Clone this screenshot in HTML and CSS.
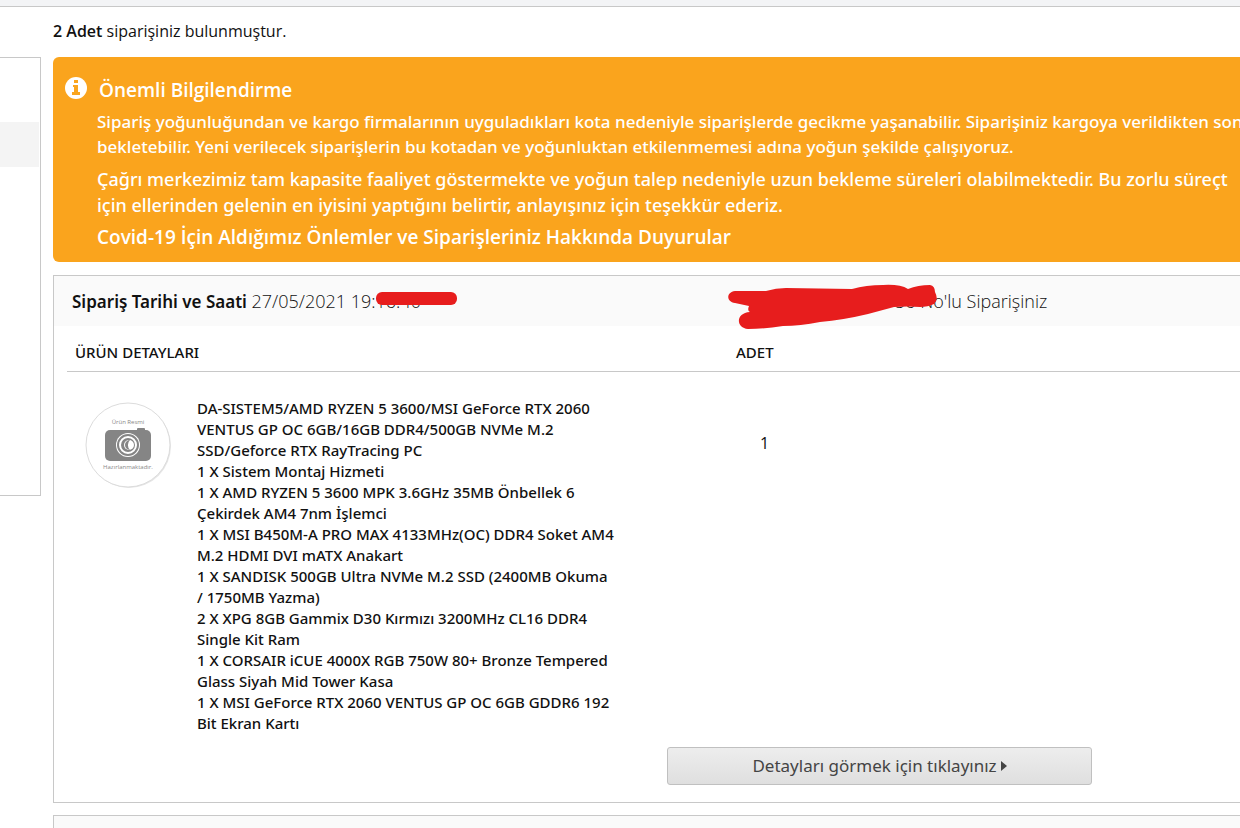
FILE: index.html
```html
<!DOCTYPE html>
<html lang="tr">
<head>
  <meta charset="UTF-8" />
  <meta name="viewport" content="width=device-width,initial-scale=1.0"/>
  <title>Siparişlerim</title>
  <link rel="stylesheet" href="styles.css">
</head>
<body>
  <div class="topbar"></div>
  <div class="page">
    <aside class="sidebar">
      <div class="sidebar-active"></div>
    </aside>
    <main class="content">
      <p class="result-count"><strong>2 Adet</strong> siparişiniz bulunmuştur.</p>

      <section class="notice">
        <h2 class="notice-title">
          <svg class="notice-icon" viewBox="0 0 22 22" aria-hidden="true">
            <circle cx="11" cy="11" r="11" fill="#fff"/>
            <path fill="#faa51e" d="M9 3h4v3H9zM8 8h5v7h2v3H7v-3h2v-5H8z"/>
          </svg>
          Önemli Bilgilendirme
        </h2>
        <p class="notice-text">Sipariş yoğunluğundan ve kargo firmalarının uyguladıkları kota nedeniyle siparişlerde gecikme yaşanabilir. Siparişiniz kargoya verildikten son<br>bekletebilir. Yeni verilecek siparişlerin bu kotadan ve yoğunluktan etkilenmemesi adına yoğun şekilde çalışıyoruz.</p>
        <p class="notice-text notice-large">Çağrı merkezimiz tam kapasite faaliyet göstermekte ve yoğun talep nedeniyle uzun bekleme süreleri olabilmektedir. Bu zorlu süreçt<br>için ellerinden gelenin en iyisini yaptığını belirtir, anlayışınız için teşekkür ederiz.</p>
        <a class="notice-link" href="#">Covid-19 İçin Aldığımız Önlemler ve Siparişleriniz Hakkında Duyurular</a>
      </section>

      <section class="order">
        <div class="order-head">
          <div class="order-date">
            <strong>Sipariş Tarihi ve Saati</strong> 27/05/2021 19:<span class="masked">16:40<svg class="time-mask" viewBox="0 0 82 14" aria-hidden="true"><rect width="81" height="13" rx="6" fill="#e71d1d"/></svg></span>
          </div>
          <div class="order-no">
            56 No'lu Siparişiniz
            <svg class="no-mask" viewBox="0 0 210 46" aria-hidden="true">
              <path fill="#e71d1d" d="M7 7H38Q48 4 58 4L124 5Q138 1 155 1Q172 0 180 5Q190 1 202 1Q207 2 207 8Q211 16 206 20Q200 23 192 23Q180 22 166 23L140 30Q115 36 92 38Q72 42 55 42Q36 45 20 45C8 44 7 29 22 28Q19 27 21 22L7 19C-2 18-2 8 7 7Z"/>
            </svg>
          </div>
        </div>
        <table class="order-table">
          <colgroup>
            <col class="col-image">
            <col class="col-detail">
            <col class="col-qty">
            <col>
          </colgroup>
          <thead>
            <tr>
              <th colspan="2">ÜRÜN DETAYLARI</th>
              <th>ADET</th>
              <th></th>
            </tr>
          </thead>
          <tbody>
            <tr>
              <td class="cell-image">
                <svg class="no-image" viewBox="0 0 92 92" role="img" aria-label="Ürün Resmi Hazırlanmaktadır">
                  <circle cx="47" cy="47" r="42" fill="#e6e6e6"/>
                  <circle cx="46" cy="46" r="42" fill="#fff" stroke="#dcdcdc"/>
                  <text x="46" y="25" text-anchor="middle" class="no-image-text">Ürün Resmi</text>
                  <rect x="23" y="31" width="46" height="31" rx="5" fill="#858585"/>
                  <rect x="55" y="29" width="8" height="5" rx="1" fill="#858585"/>
                  <circle cx="46" cy="46" r="12" fill="#fff"/>
                  <circle cx="46" cy="46" r="10" fill="none" stroke="#858585" stroke-width="2"/>
                  <circle cx="46" cy="46" r="7" fill="#858585"/>
                  <circle cx="47" cy="46" r="5" fill="#fff"/>
                  <path d="M48 41a5 5 0 0 0 0 10 7 7 0 0 1 0-10Z" fill="#858585"/>
                  <text x="46" y="70" text-anchor="middle" class="no-image-text">Hazırlanmaktadır.</text>
                </svg>
              </td>
              <td class="cell-detail">
                DA-SISTEM5/AMD RYZEN 5 3600/MSI GeForce RTX 2060<br>VENTUS GP OC 6GB/16GB DDR4/500GB NVMe M.2<br>SSD/Geforce RTX RayTracing PC<br>
                1 X Sistem Montaj Hizmeti<br>
                1 X AMD RYZEN 5 3600 MPK 3.6GHz 35MB Önbellek 6<br>Çekirdek AM4 7nm İşlemci<br>
                1 X MSI B450M-A PRO MAX 4133MHz(OC) DDR4 Soket AM4<br>M.2 HDMI DVI mATX Anakart<br>
                1 X SANDISK 500GB Ultra NVMe M.2 SSD (2400MB Okuma<br>/ 1750MB Yazma)<br>
                2 X XPG 8GB Gammix D30 Kırmızı 3200MHz CL16 DDR4<br>Single Kit Ram<br>
                1 X CORSAIR iCUE 4000X RGB 750W 80+ Bronze Tempered<br>Glass Siyah Mid Tower Kasa<br>
                1 X MSI GeForce RTX 2060 VENTUS GP OC 6GB GDDR6 192<br>Bit Ekran Kartı
              </td>
              <td class="cell-qty">1</td>
              <td></td>
            </tr>
          </tbody>
        </table>
        <div class="order-actions">
          <button class="detail-btn" type="button">Detayları görmek için tıklayınız<svg class="caret" viewBox="0 0 6 10" aria-hidden="true"><path d="M0 0L6 5L0 10Z" fill="#444"/></svg></button>
        </div>
      </section>

      <section class="order">
        <div class="order-head"></div>
      </section>
    </main>
  </div>
</body>
</html>
```

FILE: styles.css
```css
html, body {
  height: 100%;
  margin: 0;
}
body {
  overflow: hidden;
  font-family: 'Open Sans', 'Noto Sans', sans-serif;
  font-size: 16px;
  color: #111;
  background: #fff;
}
strong {
  font-weight: 600;
}
.topbar {
  height: 6px;
  background: #f3f4f6;
  border-bottom: 1px solid #c8c8c8;
}
.page {
  display: flex;
  align-items: flex-start;
  gap: 12px;
}
.sidebar {
  flex: 0 0 40px;
  margin-top: 50px;
  padding: 64px 0 328px;
  border: 1px solid #c8c8c8;
  border-left: 0;
}
.sidebar-active {
  height: 45px;
  margin-right: 1px;
  background: #f4f4f4;
}
/* the column runs past the right edge of the window */
.content {
  flex: 1;
  min-width: 0;
  margin-right: -40px;
}
.result-count {
  margin: 0;
  padding: 12px 0 14px;
  line-height: 24px;
}

.notice {
  margin-bottom: 13px;
  padding: 20px 12px 12px;
  border-radius: 6px;
  background: #faa41d;
  color: #fff;
  white-space: nowrap;
}
.notice-title {
  display: flex;
  gap: 12px;
  margin: 0;
  font-size: 19px;
  font-weight: 600;
  line-height: 26px;
}
.notice-icon {
  width: 22px;
  height: 22px;
}
.notice-text {
  margin: 6px 0 0 32px;
  font-family: 'Noto Sans', sans-serif;
  font-size: 17px;
  font-weight: 500;
  line-height: 25px;
}
.notice-large {
  margin-top: 7px;
  font-size: 18px;
  line-height: 26px;
}
.notice-link {
  display: block;
  margin: 6px 0 0 32px;
  color: #fff;
  font-size: 19px;
  font-weight: 600;
  line-height: 26px;
  text-decoration: none;
}

.order {
  margin-bottom: 12px;
  border: 1px solid #c8c8c8;
}
.order-head {
  display: flex;
  height: 50px;
  background: #fafafa;
  font-size: 18px;
  font-weight: 300;
  line-height: 50px;
}
.order-head strong {
  font-family: 'Noto Sans', sans-serif;
  font-size: 17px;
}
.order-date {
  flex: 0 0 823px;
  padding-left: 18px;
}
.order-no {
  position: relative;
}
.masked {
  position: relative;
}
.time-mask {
  position: absolute;
  left: 0;
  top: 3px;
  width: 82px;
  height: 14px;
}
.no-mask {
  position: absolute;
  left: -167px;
  top: 8px;
  width: 210px;
  height: 46px;
}

.order-table {
  width: calc(100% - 26px);
  margin: 0 13px;
  border-collapse: collapse;
  table-layout: fixed;
}
.col-image {
  width: 130px;
}
.col-detail {
  width: 531px;
}
.col-qty {
  width: 80px;
}
.order-table th {
  height: 45px;
  padding: 8px 0 0 8px;
  border-bottom: 1px solid #c8c8c8;
  box-sizing: border-box;
  font-family: 'Noto Sans', sans-serif;
  font-size: 15px;
  font-weight: 500;
  line-height: 21px;
  text-align: left;
}
.order-table td {
  padding: 0;
  vertical-align: top;
}
.order-table .cell-image {
  padding: 27px 0 0 15px;
}
.no-image {
  display: block;
  width: 92px;
  height: 92px;
}
.no-image-text {
  fill: #888;
  font-size: 6px;
}
.order-table .cell-detail {
  padding-top: 26px;
  font-family: 'Noto Sans', sans-serif;
  font-size: 15px;
  font-weight: 500;
  line-height: 21px;
  white-space: nowrap;
}
.order-table .cell-qty {
  padding: 59px 0 0 32px;
  line-height: 24px;
}
.order-actions {
  padding: 13px 0 17px 613px;
}
.detail-btn {
  width: 425px;
  height: 38px;
  padding: 0;
  display: flex;
  align-items: center;
  justify-content: center;
  gap: 4px;
  border: 1px solid #c0c0c0;
  border-radius: 3px;
  background: linear-gradient(#ededed, #dfdfdf);
  color: #444;
  font-family: 'Noto Sans', sans-serif;
  font-size: 17px;
  cursor: pointer;
}
.caret {
  width: 6px;
  height: 10px;
}
```
